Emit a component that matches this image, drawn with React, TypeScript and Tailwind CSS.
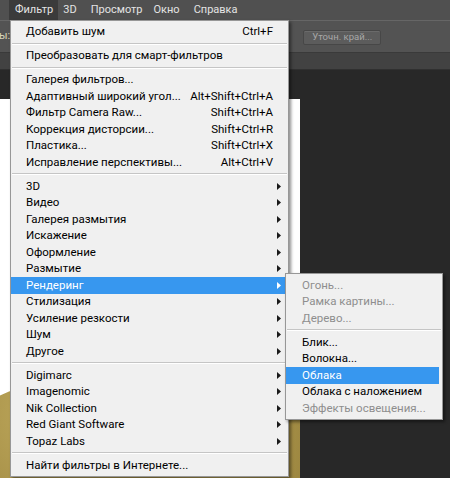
import React from 'react';

type Row =
  | { kind: 'item'; label: string; shortcut?: string; sub?: boolean; active?: boolean; disabled?: boolean }
  | { kind: 'sep' };

const mainMenu: Row[] = [
  { kind: 'item', label: 'Добавить шум', shortcut: 'Ctrl+F' },
  { kind: 'sep' },
  { kind: 'item', label: 'Преобразовать для смарт-фильтров' },
  { kind: 'sep' },
  { kind: 'item', label: 'Галерея фильтров...' },
  { kind: 'item', label: 'Адаптивный широкий угол...', shortcut: 'Alt+Shift+Ctrl+A' },
  { kind: 'item', label: 'Фильтр Camera Raw...', shortcut: 'Shift+Ctrl+A' },
  { kind: 'item', label: 'Коррекция дисторсии...', shortcut: 'Shift+Ctrl+R' },
  { kind: 'item', label: 'Пластика...', shortcut: 'Shift+Ctrl+X' },
  { kind: 'item', label: 'Исправление перспективы...', shortcut: 'Alt+Ctrl+V' },
  { kind: 'sep' },
  { kind: 'item', label: '3D', sub: true },
  { kind: 'item', label: 'Видео', sub: true },
  { kind: 'item', label: 'Галерея размытия', sub: true },
  { kind: 'item', label: 'Искажение', sub: true },
  { kind: 'item', label: 'Оформление', sub: true },
  { kind: 'item', label: 'Размытие', sub: true },
  { kind: 'item', label: 'Рендеринг', sub: true, active: true },
  { kind: 'item', label: 'Стилизация', sub: true },
  { kind: 'item', label: 'Усиление резкости', sub: true },
  { kind: 'item', label: 'Шум', sub: true },
  { kind: 'item', label: 'Другое', sub: true },
  { kind: 'sep' },
  { kind: 'item', label: 'Digimarc', sub: true },
  { kind: 'item', label: 'Imagenomic', sub: true },
  { kind: 'item', label: 'Nik Collection', sub: true },
  { kind: 'item', label: 'Red Giant Software', sub: true },
  { kind: 'item', label: 'Topaz Labs', sub: true },
  { kind: 'sep' },
  { kind: 'item', label: 'Найти фильтры в Интернете...' },
];

const renderMenu: Row[] = [
  { kind: 'item', label: 'Огонь...', disabled: true },
  { kind: 'item', label: 'Рамка картины...', disabled: true },
  { kind: 'item', label: 'Дерево...', disabled: true },
  { kind: 'sep' },
  { kind: 'item', label: 'Блик...' },
  { kind: 'item', label: 'Волокна...' },
  { kind: 'item', label: 'Облака', active: true },
  { kind: 'item', label: 'Облака с наложением' },
  { kind: 'item', label: 'Эффекты освещения...', disabled: true },
];

function Arrow({ white }: { white?: boolean }) {
  return (
    <svg width="4" height="7" viewBox="0 0 4 7" className="block">
      <path d="M0 0 L4 3.5 L0 7 Z" fill={white ? '#ffffff' : '#1a1a1a'} />
    </svg>
  );
}

function Separator() {
  return (
    <div className="h-[7.5px] flex items-center px-[1px]">
      <div className="w-full h-[2px] border-t border-[#c5c5c5] border-b-white" style={{ borderBottomWidth: 1 }} />
    </div>
  );
}

function MenuRows({ rows, padLeft, arrows }: { rows: Row[]; padLeft: string; arrows: boolean }) {
  return (
    <>
      {rows.map((r, i) => {
        if (r.kind === 'sep') return <Separator key={i} />;
        return (
          <div
            key={i}
            className={
              'h-[16.5px] flex items-center pr-[7px] ' +
              padLeft +
              (r.active ? ' bg-[#3797ef] text-white mr-[3px]' : r.disabled ? ' text-[#8e8e8e]' : ' text-black')
            }
          >
            <span className="flex-1 whitespace-nowrap">{r.label}</span>
            {r.shortcut && <span className="whitespace-nowrap">{r.shortcut}</span>}
            {arrows && (
              <span className={'w-[4px] ml-[4px] flex items-center' + (r.active ? ' -mr-[3px]' : '')}>
                {r.sub && <Arrow white={r.active} />}
              </span>
            )}
          </div>
        );
      })}
    </>
  );
}

export default function App() {
  return (
    <div className="relative w-[450px] h-[478px] overflow-hidden bg-[#282828] flex flex-col font-['Roboto',sans-serif]">
      {/* Menu bar */}
      <div className="h-[20px] bg-[#505050] flex items-stretch pl-[9px] text-[11px] text-[#e4e4e4]">
        <div className="bg-[#3b3b3b] pl-[6px] pr-[5px] flex items-center">Фильтр</div>
        <div className="flex items-center">
          <span className="ml-[5px]">3D</span>
          <span className="ml-[14px]">Просмотр</span>
          <span className="ml-[11px]">Окно</span>
          <span className="ml-[14px]">Справка</span>
        </div>
      </div>

      {/* Options bar */}
      <div className="h-[33px] bg-[#535353] border-t border-[#666666] border-b border-b-[#3a3a3a] flex items-center text-[11px]">
        <span className="text-[#d9d3b8] -ml-[1px]">ы:</span>
        <div className="ml-[293px] mt-[1px] w-[78px] h-[15px] bg-[#5c5c5c] border border-[#474747] rounded-[2px] flex items-center justify-center text-[9.5px] text-[#a8a8a8] shadow-[inset_0_1px_0_#6a6a6a]">
          Уточн. край...
        </div>
      </div>

      {/* Tab strip */}
      <div className="h-[17px] bg-[#424242] border-b border-[#303030]" />

      {/* Canvas */}
      <div className="flex-1 flex flex-col pt-[29px]">
        <div className="w-[300px] flex-1 bg-white flex flex-col justify-end">
          <div
            className="h-[103px] bg-[radial-gradient(circle_at_20%_40%,#c2ad60_0%,#a48d45_45%,#b49f55_70%,#9d8740_100%)] [clip-path:polygon(0_20%,3%_16%,7%_12%,10%_6%,14%_3%,20%_2%,40%_1%,100%_0,100%_100%,0_100%)]"
          />
        </div>
      </div>

      {/* Filter menu */}
      <div className="absolute left-[10px] top-[20px] w-[279px] bg-[#f0f0f0] border border-[#979797] pt-[2.5px] pb-[2px] text-[11.5px] shadow-[2px_2px_3px_rgba(0,0,0,0.45)]">
        <MenuRows rows={mainMenu} padLeft="pl-[15px]" arrows />
      </div>

      {/* Render submenu */}
      <div className="absolute left-[285px] top-[273px] w-[158px] bg-[#f0f0f0] border border-[#979797] pt-[3px] pb-[2px] text-[11.5px] shadow-[2px_2px_3px_rgba(0,0,0,0.45)]">
        <MenuRows rows={renderMenu} padLeft="pl-[16px]" arrows={false} />
      </div>
    </div>
  );
}
